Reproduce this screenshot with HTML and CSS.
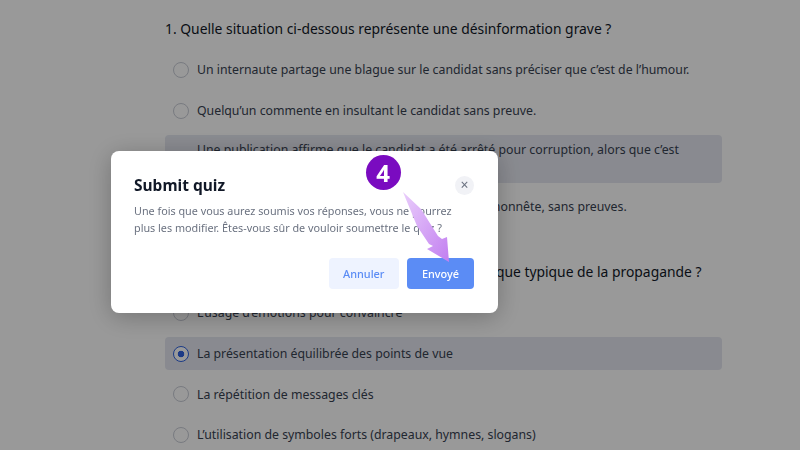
FILE: index.html
```html
<!DOCTYPE html>
<html lang="fr">
<head>
<meta charset="utf-8">
<title>Quiz</title>
<link rel="stylesheet" href="styles.css">
</head>
<body>
<main class="quiz">
  <section class="question">
    <h2 class="q-title">1. Quelle situation ci-dessous représente une désinformation grave ?</h2>
    <div class="opt"><span class="radio"></span><span>Un internaute partage une blague sur le candidat sans préciser que c’est de l’humour.</span></div>
    <div class="opt"><span class="radio"></span><span>Quelqu’un commente en insultant le candidat sans preuve.</span></div>
    <div class="opt tall marked"><span class="radio"></span><span>Une publication affirme que le candidat a été arrêté pour corruption, alors que c’est faux.</span></div>
    <div class="opt"><span class="radio"></span><span>Un internaute pense que le candidat serait très malhonnête, sans preuves.</span></div>
  </section>
  <section class="question second">
    <h2 class="q-title">2. Laquelle de ces options n’est pas une caractéristique typique de la propagande ?</h2>
    <div class="opt"><span class="radio"></span><span>L’usage d’émotions pour convaincre</span></div>
    <div class="opt marked"><span class="radio on"></span><span>La présentation équilibrée des points de vue</span></div>
    <div class="opt"><span class="radio"></span><span>La répétition de messages clés</span></div>
    <div class="opt"><span class="radio"></span><span>L’utilisation de symboles forts (drapeaux, hymnes, slogans)</span></div>
  </section>
</main>
<div class="overlay"></div>
<div class="modal">
  <div class="modal-head">
    <h3 class="modal-title">Submit quiz</h3>
    <span class="close">×</span>
  </div>
  <p class="modal-text">Une fois que vous aurez soumis vos réponses, vous ne pourrez plus les modifier. Êtes-vous sûr de vouloir soumettre le quiz ?</p>
  <div class="actions">
    <button class="btn ghost">Annuler</button>
    <button class="btn primary">Envoyé</button>
  </div>
</div>
<div class="badge">4</div>
<svg class="arrow" width="800" height="450" viewBox="0 0 800 450">
  <defs>
    <linearGradient id="ag" x1="0" y1="0" x2="1" y2="1">
      <stop offset="0" stop-color="#e9cdfb"/>
      <stop offset="1" stop-color="#c27ff0"/>
    </linearGradient>
  </defs>
  <path fill="url(#ag)" d="M403 192L421 209L438 236L442 239L447 237L449 262L427 249L433 246L429 244L417 226Z"/>
</svg>
</body>
</html>
```
FILE: styles.css
```css
* { box-sizing: border-box; }
html, body { margin: 0; height: 450px; overflow: hidden; }
body { background: #fff; font-family: "Noto Sans", sans-serif; color: #1f2937; }
.quiz { width: 557px; margin-left: 165px; padding-top: 18px; }
.question { display: flex; flex-direction: column; gap: 7.600px; }
.second { margin-top: 37.700px; }
.q-title { margin: 0 0 5.900px; font-size: 13.870px; line-height: 22px; font-weight: 400; color: #111827; white-space: nowrap; }
.opt { display: flex; align-items: center; gap: 8px; min-height: 33px; padding: 0 8px; font-size: 12.300px; line-height: 19px; color: #374151; border-radius: 4px; }
.tall { align-items: flex-start; padding: 5px 40px 5px 8px; min-height: 48px; }
.tall .radio { align-self: center; }
.marked { background: #e5e7f0; }
.radio { flex: none; width: 16px; height: 16px; border: 1.5px solid #c9ccd6; border-radius: 50%; background: #fff; }
.radio.on { border-color: #2f62e0; background: radial-gradient(circle, #2f62e0 0 3px, #fff 3.6px); }
.overlay { position: fixed; inset: 0; background: rgba(0, 0, 0, .4); }
.modal { position: fixed; left: 111px; top: 151px; width: 387px; height: 162px; padding: 23px 24px 24px 23px; background: #fff; border-radius: 8px; box-shadow: 0 4px 24px rgba(0, 0, 0, .25); display: flex; flex-direction: column; }
.modal-head { display: flex; justify-content: space-between; align-items: center; height: 22px; }
.modal-title { margin: 0; font-size: 15.500px; font-weight: 700; color: #111827; }
.close { width: 19px; height: 19px; border-radius: 50%; background: #f1f2f6; color: #6b7280; font-size: 14px; line-height: 18px; text-align: center; }
.modal-text { margin: 6px 0 0; font-size: 10.800px; line-height: 17px; color: #6b7280; }
.actions { margin-top: auto; display: flex; justify-content: flex-end; gap: 8px; }
.btn { height: 31px; border: 0; border-radius: 4px; font-family: inherit; font-size: 10.900px; font-weight: 500; padding: 0; }
.ghost { width: 70.500px; background: #eef3ff; color: #5b8cf5; }
.primary { width: 67px; background: #5b8cf5; color: #fff; }
.badge { position: fixed; left: 365.500px; top: 154.500px; width: 35px; height: 35px; border-radius: 50%; background: #7a0bc0; color: #fff; font-size: 24px; font-weight: 700; line-height: 35px; text-align: center; }
.arrow { position: fixed; left: 0; top: 0; pointer-events: none; }
```
